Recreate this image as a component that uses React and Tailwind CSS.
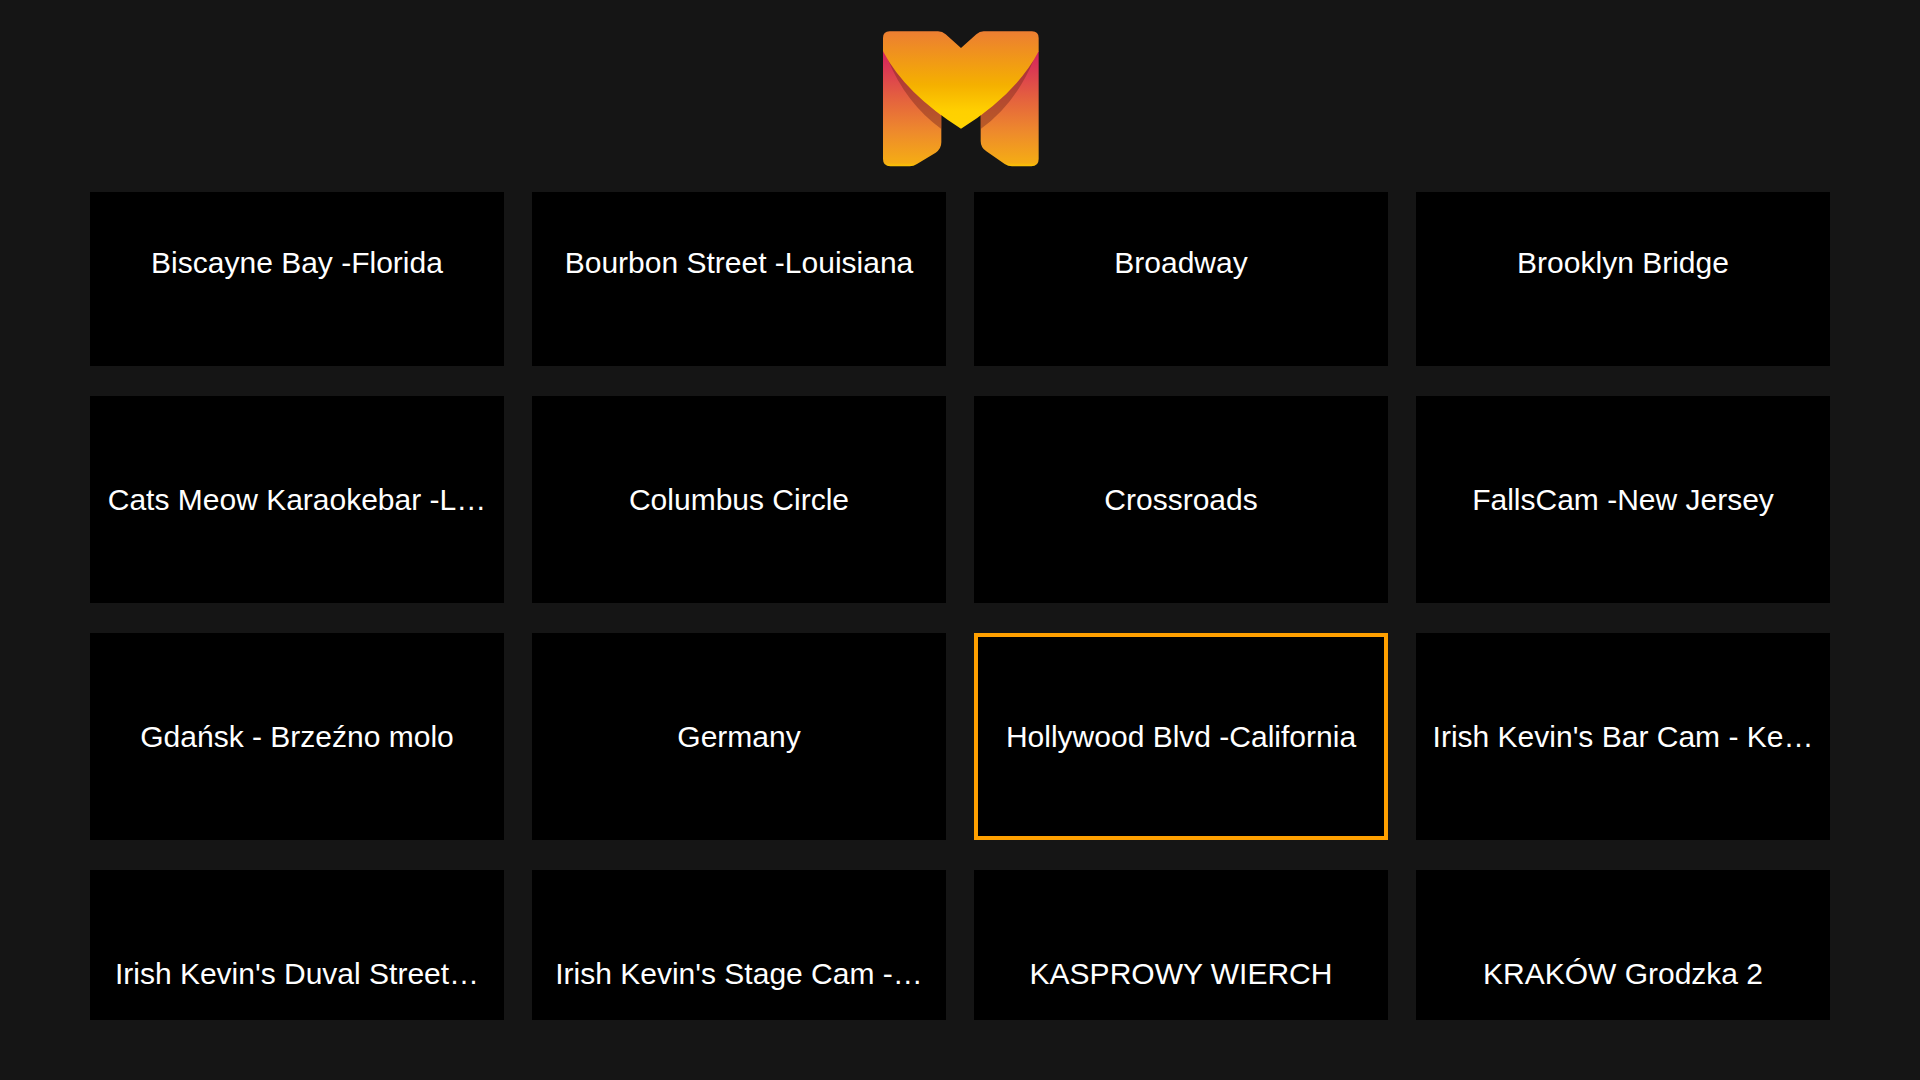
const cams = [
  'Biscayne Bay -Florida',
  'Bourbon Street -Louisiana',
  'Broadway',
  'Brooklyn Bridge',
  'Cats Meow Karaokebar -L…',
  'Columbus Circle',
  'Crossroads',
  'FallsCam -New Jersey',
  'Gdańsk - Brzeźno molo',
  'Germany',
  'Hollywood Blvd -California',
  "Irish Kevin's Bar Cam - Ke…",
  "Irish Kevin's Duval Street…",
  "Irish Kevin's Stage Cam -…",
  'KASPROWY WIERCH',
  'KRAKÓW Grodzka 2',
];

function Logo() {
  return (
    <svg viewBox="70 31 468 408" width="156" height="136" className="block ml-[2px]">
      <defs>
        <linearGradient id="legs" gradientUnits="userSpaceOnUse" x1="0" y1="92" x2="0" y2="437">
          <stop offset="0" stopColor="#D5205F" />
          <stop offset="0.4" stopColor="#E4603F" />
          <stop offset="0.7" stopColor="#EE8A2C" />
          <stop offset="0.97" stopColor="#F5AC14" />
          <stop offset="1" stopColor="#FBC400" />
        </linearGradient>
        <linearGradient id="heart" gradientUnits="userSpaceOnUse" x1="0" y1="32" x2="0" y2="324">
          <stop offset="0" stopColor="#EC7E32" />
          <stop offset="0.55" stopColor="#F5B000" />
          <stop offset="0.82" stopColor="#FFD000" />
          <stop offset="1" stopColor="#FFD400" />
        </linearGradient>
      </defs>
      <path d="M70 90 L70 415 Q70 437 92 437 L150 437 Q162 437 172 430 L228 396 Q245 385 245 365 L245 270 Z" fill="url(#legs)" />
      <path d="M537 90 L537 415 Q537 437 515 437 L457 437 Q445 437 435 430 L380 392 Q363 381 363 361 L363 270 Z" fill="url(#legs)" />
      <path d="M84 116 Q140 250 245 325 L245 285 Q150 205 84 116 Z" fill="#7A2A20" fillOpacity="0.45" />
      <path d="M523 116 Q467 250 363 325 L363 285 Q457 205 523 116 Z" fill="#7A2A20" fillOpacity="0.45" />
      <path d="M70 52 Q70 32 90 32 L235 32 Q248 32 258 41 L304 82 L350 41 Q360 32 372 32 L517 32 Q537 32 537 52 L537 92 Q470 220 304 324 Q137 220 70 92 Z" fill="url(#heart)" />
    </svg>
  );
}

export default function App() {
  return (
    <div className="h-[1080px] overflow-hidden bg-[#151515] font-['Liberation_Sans',Arial,sans-serif]">
      <div className="flex justify-center pt-[31px] mb-[25px]">
        <Logo />
      </div>
      <div className="h-[828px] overflow-hidden px-[90px]">
        <div className="grid grid-cols-4 gap-x-[28px] gap-y-[30px] -mt-[33px]">
          {cams.map((name, i) => (
            <div
              key={i}
              className={
                i === 10
                  ? 'h-[207px] bg-black flex items-center justify-center border-[4px] border-[#FFA000] box-border'
                  : 'h-[207px] bg-black flex items-center justify-center'
              }
            >
              <span className="whitespace-nowrap text-white text-[30px] leading-[36px]">{name}</span>
            </div>
          ))}
        </div>
      </div>
    </div>
  );
}
